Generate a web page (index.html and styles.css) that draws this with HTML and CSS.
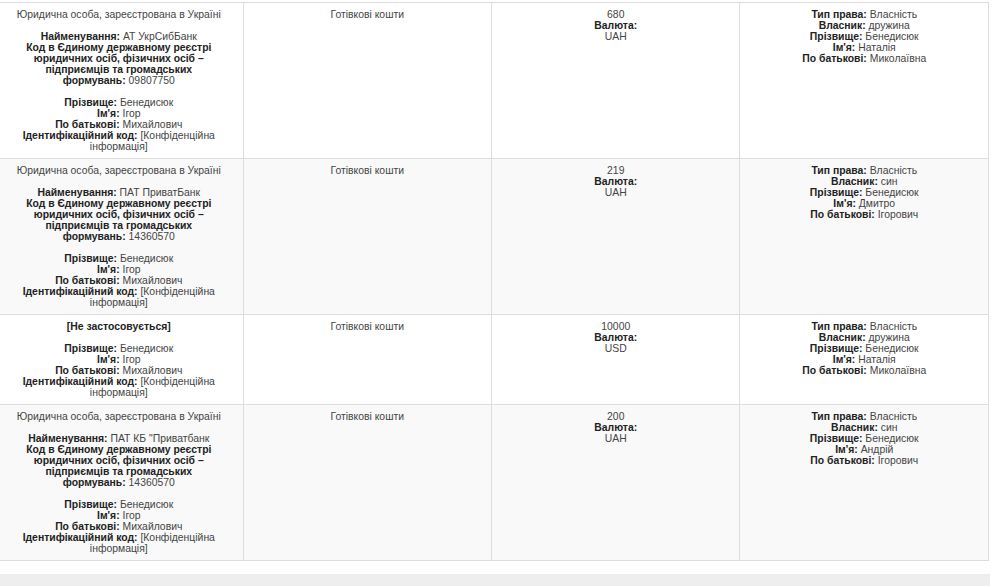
FILE: index.html
```html
<!DOCTYPE html>
<html lang="uk">
<head>
<meta charset="utf-8">
<title>Декларація</title>
<link rel="stylesheet" href="styles.css">
</head>
<body>
<div class="page">
<table class="decl">
  <tr class="odd">
    <td>Юридична особа, зареєстрована в Україні<br><br><b>Найменування:</b> АТ УкрСибБанк<br><b>Код в Єдиному державному реєстрі юридичних осіб, фізичних осіб – підприємців та громадських формувань:</b> 09807750<br><br><b>Прізвище:</b> Бенедисюк<br><b>Ім'я:</b> Ігор<br><b>По батькові:</b> Михайлович<br><b>Ідентифікаційний код:</b> [Конфіденційна інформація]</td>
    <td>Готівкові кошти</td>
    <td>680<br><b>Валюта:</b><br>UAH</td>
    <td><b>Тип права:</b> Власність<br><b>Власник:</b> дружина<br><b>Прізвище:</b> Бенедисюк<br><b>Ім'я:</b> Наталія<br><b>По батькові:</b> Миколаївна</td>
  </tr>
  <tr class="even">
    <td>Юридична особа, зареєстрована в Україні<br><br><b>Найменування:</b> ПАТ ПриватБанк<br><b>Код в Єдиному державному реєстрі юридичних осіб, фізичних осіб – підприємців та громадських формувань:</b> 14360570<br><br><b>Прізвище:</b> Бенедисюк<br><b>Ім'я:</b> Ігор<br><b>По батькові:</b> Михайлович<br><b>Ідентифікаційний код:</b> [Конфіденційна інформація]</td>
    <td>Готівкові кошти</td>
    <td>219<br><b>Валюта:</b><br>UAH</td>
    <td><b>Тип права:</b> Власність<br><b>Власник:</b> син<br><b>Прізвище:</b> Бенедисюк<br><b>Ім'я:</b> Дмитро<br><b>По батькові:</b> Ігорович</td>
  </tr>
  <tr class="odd">
    <td><b>[Не застосовується]</b><br><br><b>Прізвище:</b> Бенедисюк<br><b>Ім'я:</b> Ігор<br><b>По батькові:</b> Михайлович<br><b>Ідентифікаційний код:</b> [Конфіденційна інформація]</td>
    <td>Готівкові кошти</td>
    <td>10000<br><b>Валюта:</b><br>USD</td>
    <td><b>Тип права:</b> Власність<br><b>Власник:</b> дружина<br><b>Прізвище:</b> Бенедисюк<br><b>Ім'я:</b> Наталія<br><b>По батькові:</b> Миколаївна</td>
  </tr>
  <tr class="even">
    <td>Юридична особа, зареєстрована в Україні<br><br><b>Найменування:</b> ПАТ КБ "Приватбанк<br><b>Код в Єдиному державному реєстрі юридичних осіб, фізичних осіб – підприємців та громадських формувань:</b> 14360570<br><br><b>Прізвище:</b> Бенедисюк<br><b>Ім'я:</b> Ігор<br><b>По батькові:</b> Михайлович<br><b>Ідентифікаційний код:</b> [Конфіденційна інформація]</td>
    <td>Готівкові кошти</td>
    <td>200<br><b>Валюта:</b><br>UAH</td>
    <td><b>Тип права:</b> Власність<br><b>Власник:</b> син<br><b>Прізвище:</b> Бенедисюк<br><b>Ім'я:</b> Андрій<br><b>По батькові:</b> Ігорович</td>
  </tr>
</table>
<div class="footer-strip"></div>
</div>
</body>
</html>
```
FILE: styles.css
```css
html, body {
  margin: 0;
  padding: 0;
  background: #fff;
}
.page {
  width: 996px;
  height: 586px;
  overflow: hidden;
  padding-top: 2px;
  box-sizing: border-box;
}
.decl {
  width: 994px;
  margin-left: -5px;
  border-collapse: collapse;
  table-layout: fixed;
  font-family: "Liberation Sans", Arial, sans-serif;
  font-size: 10.4px;
  line-height: 11px;
  color: #444;
}
.decl td {
  width: 25%;
  border: 1px solid #ddd;
  padding: 6px 19px 6px;
  text-align: center;
  vertical-align: top;
}
.decl td:first-child {
  border-left: none;
}
.decl b {
  color: #222;
  font-weight: bold;
}
.decl .even td {
  background: #f9f9f9;
}
.footer-strip {
  margin-top: 13px;
  width: 990px;
  height: 20px;
  background: #eee;
}
```
